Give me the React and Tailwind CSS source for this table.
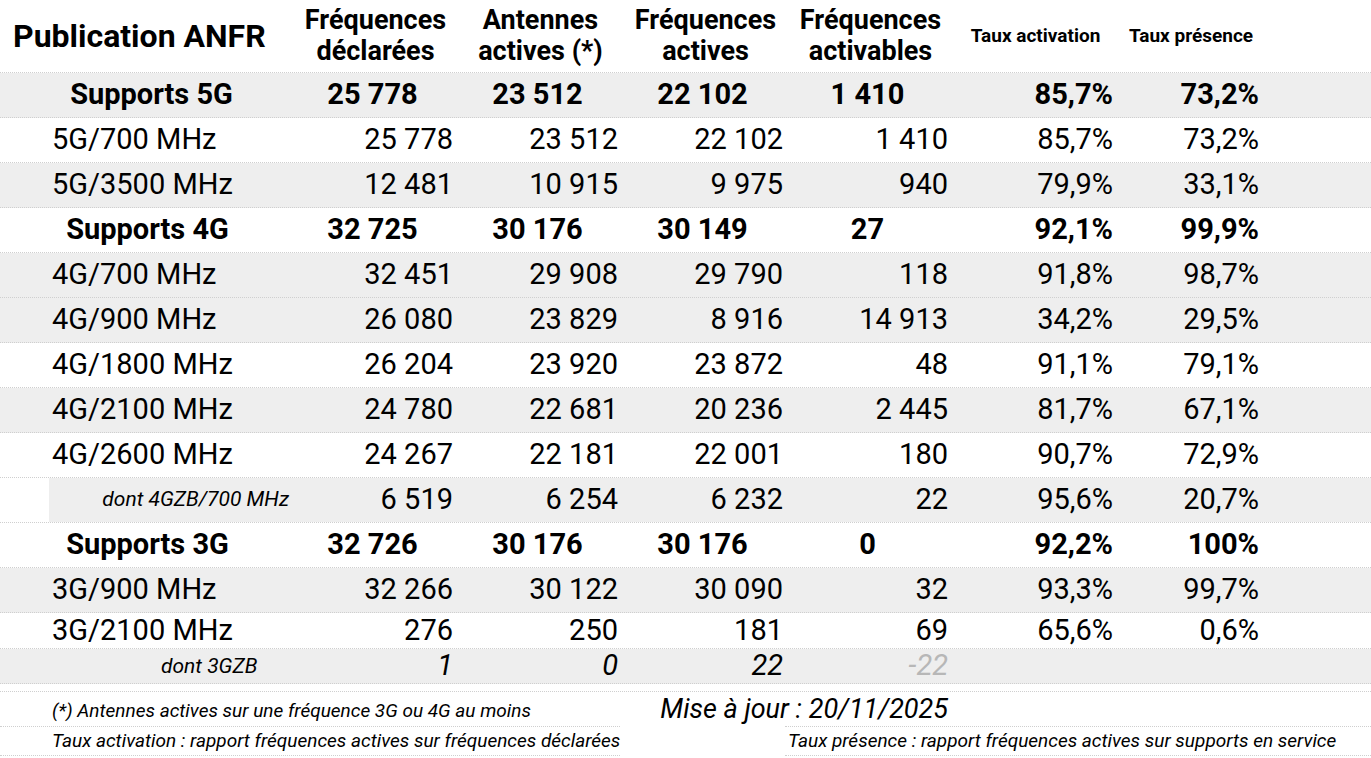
import React from "react";

const COLS = "grid grid-cols-[293px_165px_165px_165px_165px_165px_146px_1fr]";
const LINE = "border-b border-dotted border-[#cfcfcf]";

const rows = [
  { kind: "section", label: "Supports 5G", v: ["25 778", "23 512", "22 102", "1 410", "85,7%", "73,2%"], gray: true },
  { label: "5G/700 MHz", v: ["25 778", "23 512", "22 102", "1 410", "85,7%", "73,2%"] },
  { label: "5G/3500 MHz", v: ["12 481", "10 915", "9 975", "940", "79,9%", "33,1%"], gray: true },
  { kind: "section", label: "Supports 4G", v: ["32 725", "30 176", "30 149", "27", "92,1%", "99,9%"], shift: true },
  { label: "4G/700 MHz", v: ["32 451", "29 908", "29 790", "118", "91,8%", "98,7%"], gray: true },
  { label: "4G/900 MHz", v: ["26 080", "23 829", "8 916", "14 913", "34,2%", "29,5%"], gray: true },
  { label: "4G/1800 MHz", v: ["26 204", "23 920", "23 872", "48", "91,1%", "79,1%"] },
  { label: "4G/2100 MHz", v: ["24 780", "22 681", "20 236", "2 445", "81,7%", "67,1%"], gray: true },
  { label: "4G/2600 MHz", v: ["24 267", "22 181", "22 001", "180", "90,7%", "72,9%"] },
  { kind: "sub", label: "dont 4GZB/700 MHz", v: ["6 519", "6 254", "6 232", "22", "95,6%", "20,7%"] },
  { kind: "section", label: "Supports 3G", v: ["32 726", "30 176", "30 176", "0", "92,2%", "100%"], shift: true },
  { label: "3G/900 MHz", v: ["32 266", "30 122", "30 090", "32", "93,3%", "99,7%"], gray: true },
];

function Header() {
  const two = (a, b) => (
    <div className="flex flex-col items-center justify-center text-[27px] leading-[31px] font-bold">
      <span>{a}</span>
      <span>{b}</span>
    </div>
  );
  return (
    <div className={`${COLS} h-[73px] ${LINE} bg-white`}>
      <div className="flex items-center pl-[13px] text-[32px] font-bold">Publication ANFR</div>
      {two("Fréquences", "déclarées")}
      {two("Antennes", "actives (*)")}
      {two("Fréquences", "actives")}
      {two("Fréquences", "activables")}
      <div className="flex items-center justify-center text-[19px] font-bold">Taux activation</div>
      <div className="flex items-center justify-center text-[19px] font-bold">Taux présence</div>
      <div />
    </div>
  );
}

function Row({ row }) {
  const section = row.kind === "section";
  if (row.kind === "sub") {
    return (
      <div className={`flex h-[45px] ${LINE}`}>
        <div className="w-[49px] bg-white" />
        <div className="grid flex-1 grid-cols-[244px_165px_165px_165px_165px_165px_146px_1fr] bg-[#eeeeee] text-[29px]">
          <div className="flex items-center justify-end pr-[4px] text-[21px] italic">{row.label}</div>
          {row.v.map((x, i) => (
            <div key={i} className="flex items-center justify-end pr-[5px]">{x}</div>
          ))}
          <div />
        </div>
      </div>
    );
  }
  return (
    <div className={`${COLS} h-[45px] ${LINE} text-[29px] ${row.gray ? "bg-[#eeeeee]" : "bg-white"} ${section ? "font-bold" : ""}`}>
      {section ? (
        <div className={`flex items-center justify-center ${row.shift ? "pl-[2px]" : "pl-[10px]"}`}>{row.label}</div>
      ) : (
        <div className="flex items-center pl-[52px]">{row.label}</div>
      )}
      {row.v.map((x, i) => (
        <div
          key={i}
          className={`flex items-center ${section && i < 4 ? "justify-center pr-[6px]" : "justify-end pr-[5px]"}`}
        >
          {x}
        </div>
      ))}
      <div />
    </div>
  );
}

export default function App() {
  return (
    <div className="w-[1371px] h-[758px] bg-white text-black font-['Roboto',sans-serif] overflow-hidden">
      <Header />
      {rows.map((r, i) => (
        <Row key={i} row={r} />
      ))}

      {/* 3G/2100 */}
      <div className={`${COLS} h-[36px] ${LINE} bg-white text-[29px] leading-[24px]`}>
        <div className="flex items-center pl-[52px] pb-[1px]">3G/2100 MHz</div>
        {["276", "250", "181", "69", "65,6%", "0,6%"].map((x, i) => (
          <div key={i} className="flex items-center justify-end pr-[5px] pb-[1px]">{x}</div>
        ))}
        <div />
      </div>

      {/* dont 3GZB */}
      <div className={`${COLS} h-[35px] ${LINE} bg-[#eeeeee] text-[29px] leading-[24px] italic`}>
        <div className="flex items-center pl-[161px] text-[21px]">dont 3GZB</div>
        <div className="flex items-center justify-end pr-[5px] pb-[2px]">1</div>
        <div className="flex items-center justify-end pr-[5px] pb-[2px]">0</div>
        <div className="flex items-center justify-end pr-[5px] pb-[2px]">22</div>
        <div className="flex items-center justify-end pr-[5px] pb-[2px] text-[#b7b7b7]">-22</div>
        <div />
        <div />
        <div />
      </div>

      <div className={`h-[8px] ${LINE}`} />

      {/* footer */}
      <div className={`${COLS} h-[34px] italic whitespace-nowrap leading-[24px]`}>
        <div className="col-span-3 flex items-center pl-[52px] pt-[4px] text-[19px]">
          (*) Antennes actives sur une fréquence 3G ou 4G au moins
        </div>
        <div className="col-span-2 flex items-center justify-end pr-[5px] text-[27px]">
          Mise à jour : 20/11/2025
        </div>
      </div>
      <div className="flex italic text-[19px] whitespace-nowrap">
        <div className="flex h-[30px] w-[620px] items-center border-y border-dotted border-[#cfcfcf] pl-[52px]">
          Taux activation : rapport fréquences actives sur fréquences déclarées
        </div>
        <div className="w-[165px]" />
        <div className="flex h-[30px] flex-1 items-center border-y border-dotted border-[#cfcfcf] pl-[3px]">
          Taux présence : rapport fréquences actives sur supports en service
        </div>
      </div>
    </div>
  );
}
